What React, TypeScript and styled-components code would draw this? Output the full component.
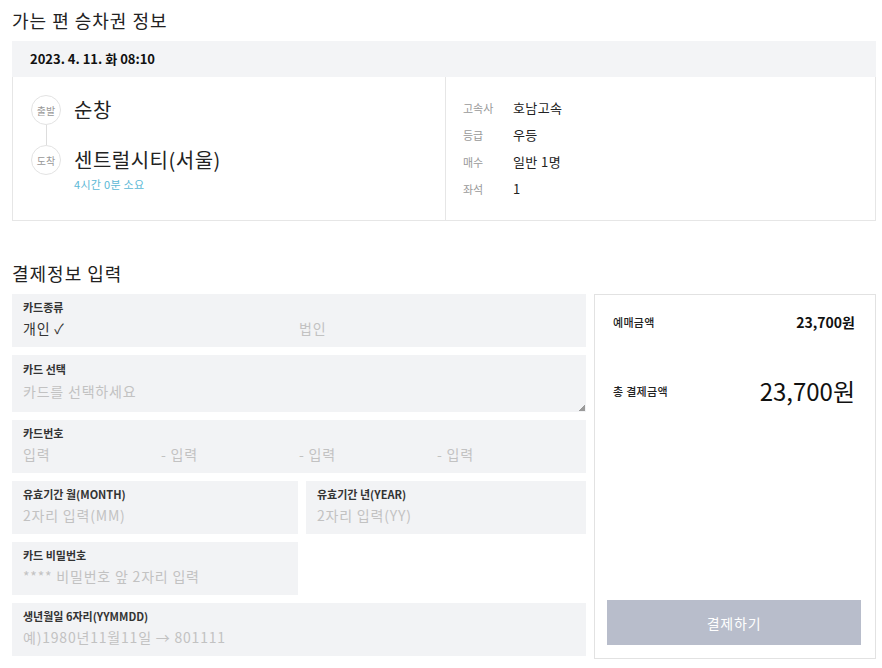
import React from "react";
import styled, { createGlobalStyle } from "styled-components";

const GlobalStyle = createGlobalStyle`
	body {
		margin: 0;
		background: #fff;
		font-family: "Noto Sans CJK KR", "Noto Sans", sans-serif;
		color: #222;
	}
	* { box-sizing: border-box; }
`;

const Page = styled.div`
	width: 876px;
	padding-left: 12px;
`;

const SectionTitle = styled.h2<{ $top?: number }>`
	margin: 0;
	padding: ${(p) => p.$top ?? 7}px 0 8px;
	font-size: 18px;
	line-height: 26px;
	font-weight: 400;
	letter-spacing: 1px;
	color: #222;
`;

/* ticket */
const TicketHead = styled.div`
	height: 36px;
	line-height: 36px;
	padding-left: 18px;
	background: #f3f4f6;
	font-size: 13px;
	font-weight: 700;
	color: #111;
`;

const TicketBody = styled.div`
	display: grid;
	grid-template-columns: 432px 1fr;
	height: 144px;
	border: 1px solid #e6e6e6;
	border-top: none;
`;

const Route = styled.div`
	padding: 18px 0 0 18px;
`;

const Stop = styled.div`
	display: flex;
	align-items: center;
	gap: 13px;
	height: 30px;
`;

const Dot = styled.div`
	width: 30px;
	height: 30px;
	border-radius: 50%;
	border: 1px solid #e3e3e3;
	display: flex;
	align-items: center;
	justify-content: center;
	font-size: 10px;
	color: #999;
	flex-shrink: 0;
`;

const Station = styled.div`
	font-size: 20px;
	line-height: 28px;
	letter-spacing: 0.5px;
	color: #222;
`;

const Connector = styled.div`
	width: 1px;
	height: 20px;
	margin-left: 15px;
	background: #ddd;
`;

const Duration = styled.div`
	margin: 2px 0 0 43px;
	font-size: 11px;
	line-height: 14px;
	letter-spacing: 0.3px;
	color: #5cb8d6;
`;

const Details = styled.div`
	border-left: 1px solid #e6e6e6;
	padding: 17px 0 0 17px;
`;

const DetailRow = styled.div`
	display: flex;
	align-items: center;
	height: 27px;
`;

const DetailLabel = styled.span`
	width: 50px;
	font-size: 11px;
	color: #999;
`;

const DetailValue = styled.span`
	font-size: 13px;
	letter-spacing: 0.4px;
	color: #222;
`;

/* payment */
const PayLayout = styled.div`
	display: grid;
	grid-template-columns: 574px 282px;
	gap: 8px;
	align-items: start;
`;

const FormCol = styled.div`
	display: flex;
	flex-direction: column;
	gap: 8px;
`;

const SplitRow = styled.div`
	display: grid;
	grid-template-columns: 286px 1fr;
	gap: 8px;
`;

const Field = styled.div<{ $tall?: boolean }>`
	position: relative;
	height: ${(p) => (p.$tall ? 57 : 53)}px;
	background: #f2f3f5;
	padding: ${(p) => (p.$tall ? "7px 11px 0" : "6px 11px 0")};
`;

const Label = styled.div`
	font-size: 11px;
	line-height: 14px;
	font-weight: 700;
	color: #333;
`;

const Value = styled.div<{ $tall?: boolean }>`
	margin-top: ${(p) => (p.$tall ? 5 : 4)}px;
	font-size: 14px;
	line-height: 20px;
	letter-spacing: 0.8px;
`;

const Columns = styled.div<{ $count: number }>`
	display: grid;
	grid-template-columns: repeat(${(p) => p.$count}, 1fr);
`;

const Text = styled.span<{ $muted?: boolean }>`
	color: ${(p) => (p.$muted ? "#c2c2c2" : "#333")};
	white-space: nowrap;
`;

const ResizeGrip = styled.span`
	position: absolute;
	right: 1px;
	bottom: 1px;
	width: 6px;
	height: 6px;
	background: linear-gradient(135deg, transparent 50%, #9a9a9a 50%);
`;

const Summary = styled.div`
	height: 365px;
	border: 1px solid #e2e2e2;
	display: flex;
	flex-direction: column;
`;

const SumRow = styled.div<{ $top: number }>`
	display: flex;
	align-items: center;
	justify-content: space-between;
	padding: 0 20px 0 18px;
	margin-top: ${(p) => p.$top}px;
`;

const SumLabel = styled.span`
	font-size: 11px;
	font-weight: 500;
	letter-spacing: 0.3px;
	color: #222;
`;

const Amount = styled.span<{ $big?: boolean }>`
	font-size: ${(p) => (p.$big ? 24 : 14)}px;
	line-height: ${(p) => (p.$big ? 34 : 20)}px;
	font-weight: ${(p) => (p.$big ? 400 : 700)};
	color: #111;
`;

const PayButton = styled.button`
	margin: auto 14px 13px 12px;
	height: 45px;
	border: none;
	background: #b8bdcb;
	color: #fff;
	font-family: inherit;
	font-size: 14px;
	letter-spacing: 0.8px;
`;

const details = [
	["고속사", "호남고속"],
	["등급", "우등"],
	["매수", "일반 1명"],
	["좌석", "1"],
];

const App: React.FC = () => {
	return (
		<Page>
			<GlobalStyle />
			<SectionTitle>가는 편 승차권 정보</SectionTitle>
			<TicketHead>2023. 4. 11. 화 08:10</TicketHead>
			<TicketBody>
				<Route>
					<Stop>
						<Dot>출발</Dot>
						<Station>순창</Station>
					</Stop>
					<Connector />
					<Stop>
						<Dot>도착</Dot>
						<Station>센트럴시티(서울)</Station>
					</Stop>
					<Duration>4시간 0분 소요</Duration>
				</Route>
				<Details>
					{details.map(([k, v]) => (
						<DetailRow key={k}>
							<DetailLabel>{k}</DetailLabel>
							<DetailValue>{v}</DetailValue>
						</DetailRow>
					))}
				</Details>
			</TicketBody>

			<SectionTitle $top={39}>결제정보 입력</SectionTitle>
			<PayLayout>
				<FormCol>
					<Field>
						<Label>카드종류</Label>
						<Value>
							<Columns $count={2}>
								<Text>개인 ✓</Text>
								<Text $muted>법인</Text>
							</Columns>
						</Value>
					</Field>
					<Field $tall>
						<Label>카드 선택</Label>
						<Value $tall>
							<Text $muted>카드를 선택하세요</Text>
						</Value>
						<ResizeGrip />
					</Field>
					<Field>
						<Label>카드번호</Label>
						<Value>
							<Columns $count={4}>
								<Text $muted>입력</Text>
								<Text $muted>- 입력</Text>
								<Text $muted>- 입력</Text>
								<Text $muted>- 입력</Text>
							</Columns>
						</Value>
					</Field>
					<SplitRow>
						<Field>
							<Label>유효기간 월(MONTH)</Label>
							<Value>
								<Text $muted>2자리 입력(MM)</Text>
							</Value>
						</Field>
						<Field>
							<Label>유효기간 년(YEAR)</Label>
							<Value>
								<Text $muted>2자리 입력(YY)</Text>
							</Value>
						</Field>
					</SplitRow>
					<SplitRow>
						<Field>
							<Label>카드 비밀번호</Label>
							<Value>
								<Text $muted>**** 비밀번호 앞 2자리 입력</Text>
							</Value>
						</Field>
					</SplitRow>
					<Field>
						<Label>생년월일 6자리(YYMMDD)</Label>
						<Value>
							<Text $muted>예)1980년11월11일 → 801111</Text>
						</Value>
					</Field>
				</FormCol>

				<Summary>
					<SumRow $top={17}>
						<SumLabel>예매금액</SumLabel>
						<Amount>23,700원</Amount>
					</SumRow>
					<SumRow $top={42}>
						<SumLabel>총 결제금액</SumLabel>
						<Amount $big>23,700원</Amount>
					</SumRow>
					<PayButton>결제하기</PayButton>
				</Summary>
			</PayLayout>
		</Page>
	);
};

export default App;
